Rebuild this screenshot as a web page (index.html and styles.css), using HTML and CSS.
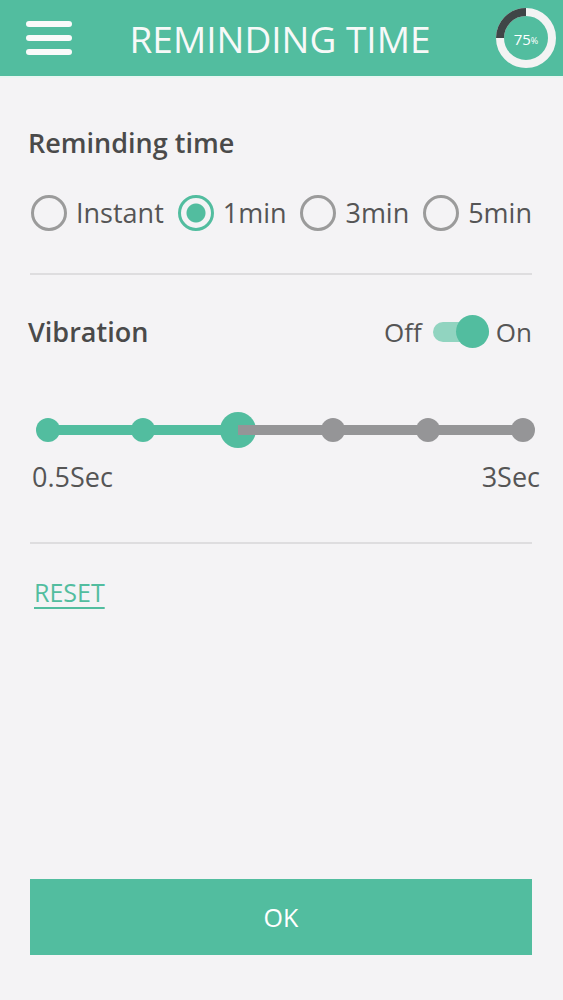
FILE: index.html
```html
<!DOCTYPE html>
<html>
    <head>
        <meta charset = utf-8>
        <meta name = viewport content = 'width = device-width, initial-scale = 1'>
        <title>Reminding Time</title>

        <link rel="stylesheet" href="styles.css">
    </head>

    <body>
        <header class = bar>
            <div class = burger><span></span><span></span><span></span></div>
            <h1>REMINDING TIME</h1>
            <div class = donut>
                <svg width = 60 height = 60 viewBox = "0 0 60 60">
                    <circle cx = 30 cy = 30 r = 26 fill = none stroke = "#f3f3f3" stroke-width = 8></circle>
                    <path d = "M30 4 A26 26 0 0 0 4 30" fill = none stroke = "#3f4547" stroke-width = 8></path>
                </svg>
                <span class = pct>75<small>%</small></span>
            </div>
        </header>

        <main class = page>
            <h2>Reminding time</h2>
            <div class = radios>
                <label class = radio><i></i>Instant</label>
                <label class = "radio on"><i></i>1min</label>
                <label class = radio><i></i>3min</label>
                <label class = radio><i></i>5min</label>
            </div>

            <hr>

            <div class = row>
                <h2>Vibration</h2>
                <div class = toggle>
                    Off<span class = switch><b></b></span>On
                </div>
            </div>

            <div class = slider>
                <div class = track>
                    <span class = fill></span>
                </div>
                <div class = dots>
                    <i class = done></i>
                    <i class = done></i>
                    <i class = "done big"></i>
                    <i></i>
                    <i></i>
                    <i></i>
                </div>
            </div>
            <div class = ends>
                <span>0.5Sec</span>
                <span>3Sec</span>
            </div>

            <hr class = low>

            <a class = reset href = "#">RESET</a>
        </main>

        <button class = ok>OK</button>
    </body>
</html>
```

FILE: styles.css
```css
html {
    background: #f4f3f5;
}

body {
    margin: 0;
    height: 1000px;
    display: flex;
    flex-direction: column;
    font-family: "Open Sans", sans-serif;
    color: #4f4f4f;
}

.bar {
    height: 76px;
    background: #52bd9f;
    display: flex;
    align-items: center;
    padding: 0 7px 0 26px;
    border-bottom: 2px solid #e9f6f2;
}

.burger {
    width: 46px;
    display: flex;
    flex-direction: column;
    gap: 8px;
}

.burger span {
    height: 6px;
    border-radius: 3px;
    background: #fafafa;
}

.bar h1 {
    flex: 1;
    margin: 0 8px 0 0;
    text-align: center;
    font-weight: 400;
    font-size: 37px;
    color: #f7f9f8;
}

.donut {
    width: 60px;
    height: 60px;
    position: relative;
}

.donut svg {display: block}

.pct {
    position: absolute;
    inset: 0;
    display: flex;
    align-items: center;
    justify-content: center;
    color: #fff;
    font-size: 15px;
    padding-top: 2px;
}

.pct small {font-size: 9px; margin-top: 3px}

.page {
    flex: 1;
    padding: 47px 31px 0 28px;
    line-height: 36px;
}

h2 {
    margin: 0;
    font-size: 27px;
    font-weight: 600;
    color: #4a4a4a;
}

.radios {
    display: flex;
    justify-content: space-between;
    margin: 34px 0 0 3px;
}

.radio {
    display: flex;
    align-items: center;
    gap: 9px;
    font-size: 27px;
    color: #555;
}

.radio i {
    width: 30px;
    height: 30px;
    border: 3px solid #9b9b9b;
    border-radius: 50%;
    box-sizing: content-box;
}

.radio.on i {
    border-color: #52bd9f;
    background: radial-gradient(circle, #52bd9f 0 9px, transparent 10px);
}

hr {
    border: none;
    height: 2px;
    background: #dedddf;
    margin: 42px 0 0 2px;
}

hr.low {margin-top: 47px}

.row {
    display: flex;
    justify-content: space-between;
    align-items: center;
    margin-top: 39px;
}

.toggle {
    display: flex;
    align-items: center;
    font-size: 26px;
    color: #555;
}

.switch {
    width: 56px;
    height: 20px;
    border-radius: 10px;
    background: #91d4c0;
    position: relative;
    margin: 0 7px 0 11px;
}

.switch b {
    position: absolute;
    right: 0;
    top: -7px;
    width: 33px;
    height: 33px;
    border-radius: 50%;
    background: #52bd9f;
}

.slider {
    position: relative;
    margin: 62px -3px 0 8px;
    height: 36px;
}

.track {
    position: absolute;
    left: 12px;
    right: 12px;
    top: 13px;
    height: 10px;
    background: #959597;
}

.fill {
    display: block;
    width: 40%;
    height: 100%;
    background: #52bd9f;
}

.dots {
    display: flex;
    justify-content: space-between;
    align-items: center;
    height: 100%;
}

.dots i {
    width: 24px;
    height: 24px;
    border-radius: 50%;
    background: #959597;
}

.dots i.done {background: #52bd9f}
.dots i.big {width: 36px; height: 36px; margin: 0 -6px}

.ends {
    display: flex;
    justify-content: space-between;
    margin: 11px -8px 0 4px;
    font-size: 27px;
    color: #555;
}

.reset {
    display: inline-block;
    margin: 30px 0 0 6px;
    font-size: 25px;
    color: #52bd9f;
    text-decoration: underline 2px;
    text-underline-offset: 5px;
}

.ok {
    margin: 0 31px 45px 30px;
    height: 76px;
    border: none;
    background: #52bd9f;
    color: #fff;
    font-family: "Open Sans", sans-serif;
    font-size: 25px;
}
```
